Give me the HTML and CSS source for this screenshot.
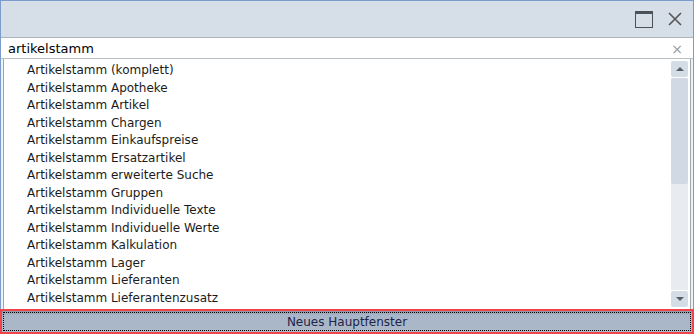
FILE: index.html
```
<!DOCTYPE html>
<html lang="de">
<head>
  <meta charset="UTF-8">
  <title>Suche</title>
  <link rel="stylesheet" href="styles.css">
</head>
<body>
  <div class="window">
    <div class="title-bar">
      <span class="btn-max"></span>
      <svg class="btn-close" width="14" height="14" viewBox="0 0 14 14">
        <path d="M1 1 L13 13 M13 1 L1 13" stroke="#555" stroke-width="1.6" fill="none"/>
      </svg>
    </div>

    <div class="search">
      <span class="search-text">artikelstamm</span>
      <span class="search-clear">&#215;</span>
    </div>

    <div class="list-box">
      <ul class="list">
        <li>Artikelstamm (komplett)</li>
        <li>Artikelstamm Apotheke</li>
        <li>Artikelstamm Artikel</li>
        <li>Artikelstamm Chargen</li>
        <li>Artikelstamm Einkaufspreise</li>
        <li>Artikelstamm Ersatzartikel</li>
        <li>Artikelstamm erweiterte Suche</li>
        <li>Artikelstamm Gruppen</li>
        <li>Artikelstamm Individuelle Texte</li>
        <li>Artikelstamm Individuelle Werte</li>
        <li>Artikelstamm Kalkulation</li>
        <li>Artikelstamm Lager</li>
        <li>Artikelstamm Lieferanten</li>
        <li>Artikelstamm Lieferantenzusatz</li>
      </ul>
      <!-- scrollbar -->
      <div class="scrollbar">
        <div class="sb-btn"><span class="arrow-up"></span></div>
        <div class="sb-track">
          <div class="sb-thumb"></div>
        </div>
        <div class="sb-btn"><span class="arrow-down"></span></div>
      </div>
    </div>

    <button class="main-button">Neues Hauptfenster</button>
  </div>
</body>
</html>
```

FILE: styles.css
```
* {
  box-sizing: border-box;
}

html, body {
  margin: 0;
  padding: 0;
  width: 694px;
  height: 334px;
  overflow: hidden;
  background-color: #fff;
}

body {
  font-family: "DejaVu Sans", Verdana, sans-serif;
  font-size: 12px;
  color: #1b1b1b;
}

.window {
  width: 694px;
  height: 334px;
  border: 1px solid #7b9bcc;
  border-bottom: none;
  background-color: #eef1f5;
  display: flex;
  flex-direction: column;
}

.title-bar {
  height: 37px;
  background-color: #d6dee7;
  border-bottom: 1px solid #aab3bd;
  display: flex;
  justify-content: flex-end;
  align-items: center;
  padding-right: 11px;
  gap: 15px;
}

.btn-max {
  width: 18px;
  height: 17px;
  border: 1.5px solid #4d5257;
  border-top-width: 3px;
}

.search {
  height: 21px;
  background-color: #fff;
  display: flex;
  align-items: center;
  padding: 1px 7px 0 7px;
  border-bottom: 1px solid #b9c0c8;
}

.search-text {
  flex: 1;
  font-size: 13px;
  color: #000;
}

.search-clear {
  color: #9a9a9a;
  font-size: 14px;
  margin-right: 3px;
}

.list-box {
  flex: 1;
  margin: 0 2px 0 2px;
  background-color: #fff;
  border-left: 1px solid #9da6b0;
  border-right: 1px solid #9da6b0;
  display: flex;
}

.list {
  flex: 1;
  list-style: none;
  margin: 0;
  padding: 3px 0 0 23px;
}

.list li {
  height: 17.5px;
  line-height: 17.5px;
  white-space: nowrap;
}

.scrollbar {
  width: 17px;
  margin: 2px 2px 2px 0;
  display: flex;
  flex-direction: column;
  gap: 1px;
}

.sb-btn {
  height: 16px;
  background-color: #d4dce6;
  border-radius: 2px;
  display: flex;
  align-items: center;
  justify-content: center;
}

.arrow-up {
  border-left: 4px solid transparent;
  border-right: 4px solid transparent;
  border-bottom: 4px solid #55606d;
}

.arrow-down {
  border-left: 4px solid transparent;
  border-right: 4px solid transparent;
  border-top: 4px solid #55606d;
}

.sb-track {
  flex: 1;
  background-color: #e8ecf1;
}

.sb-thumb {
  height: 106px;
  background-color: #d1d9e4;
  border-radius: 2px;
}

.main-button {
  height: 25px;
  margin: 0 -1px;
  border: 2px solid #f0434a;
  background: linear-gradient(#8e9aab 0, #a9b6c7 4px, #abb8c9 100%);
  font-family: "DejaVu Sans", Verdana, sans-serif;
  font-size: 12px;
  color: #1c2448;
  padding: 0;
  outline: 1px dotted #000;
  outline-offset: -4px;
}
```
